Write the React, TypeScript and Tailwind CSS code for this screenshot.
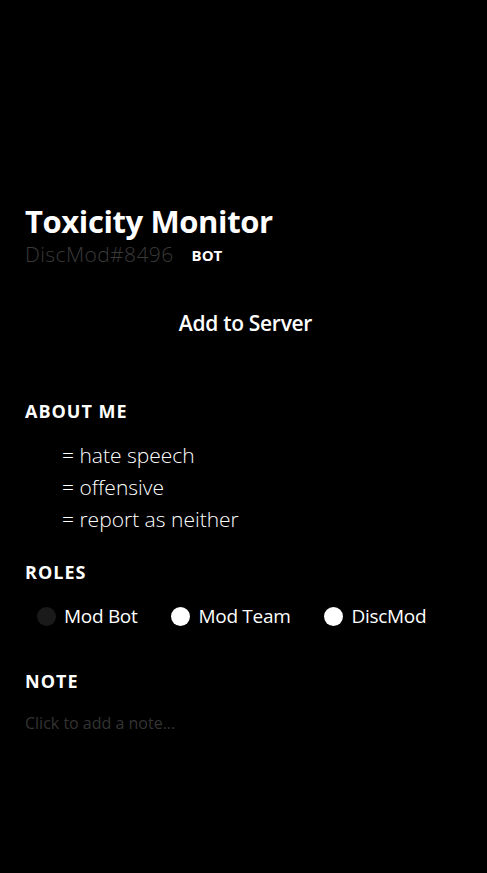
import React from 'react'

const font = { fontFamily: '"Open Sans", "Noto Sans", sans-serif' }

function Role({ name, dot }: { name: string; dot: string }) {
  return (
    <div className="flex items-center gap-2 h-8 px-3 rounded-md">
      <span className={`w-[19px] h-[19px] rounded-full ${dot}`} />
      <span className="text-[19px] font-medium text-white tracking-[-0.3px]">{name}</span>
    </div>
  )
}

export default function App() {
  const about = ['= hate speech', '= offensive', '= report as neither']
  return (
    <div className="min-h-[873px] w-full bg-black text-white" style={font}>
      <div className="h-[203px]" />
      <div className="px-[25px]">
        <h1 className="text-[31px] leading-[36px] font-bold tracking-[-0.4px]">Toxicity Monitor</h1>
        <div className="mt-1 flex items-center gap-[18px] h-6">
          <span className="text-[21px] font-light tracking-[0.4px] text-[#3a3a3a]">DiscMod#8496</span>
          <span className="text-[15px] font-bold leading-4 text-white">BOT</span>
        </div>

        <button className="mt-[37px] pl-1 w-full h-10 rounded text-[21px] font-semibold text-white tracking-[-0.3px]">
          Add to Server
        </button>

        <h2 className="mt-[57px] text-[18px] leading-5 font-bold tracking-[1px]">ABOUT ME</h2>
        <div className="mt-[18px] pl-[37px]">
          {about.map((line) => (
            <p key={line} className="text-[21px] leading-8 font-light">{line}</p>
          ))}
        </div>

        <h2 className="mt-[27px] text-[18px] leading-5 font-bold tracking-[1px]">ROLES</h2>
        <div className="mt-[18px] flex items-center gap-[10px]">
          <Role name="Mod Bot" dot="bg-[#1a1a1a]" />
          <Role name="Mod Team" dot="bg-white" />
          <Role name="DiscMod" dot="bg-white" />
        </div>

        <h2 className="mt-[39px] text-[18px] leading-5 font-bold tracking-[1px]">NOTE</h2>
        <p className="mt-5 text-[16px] leading-6 text-[#333]">Click to add a note...</p>
      </div>
    </div>
  )
}
